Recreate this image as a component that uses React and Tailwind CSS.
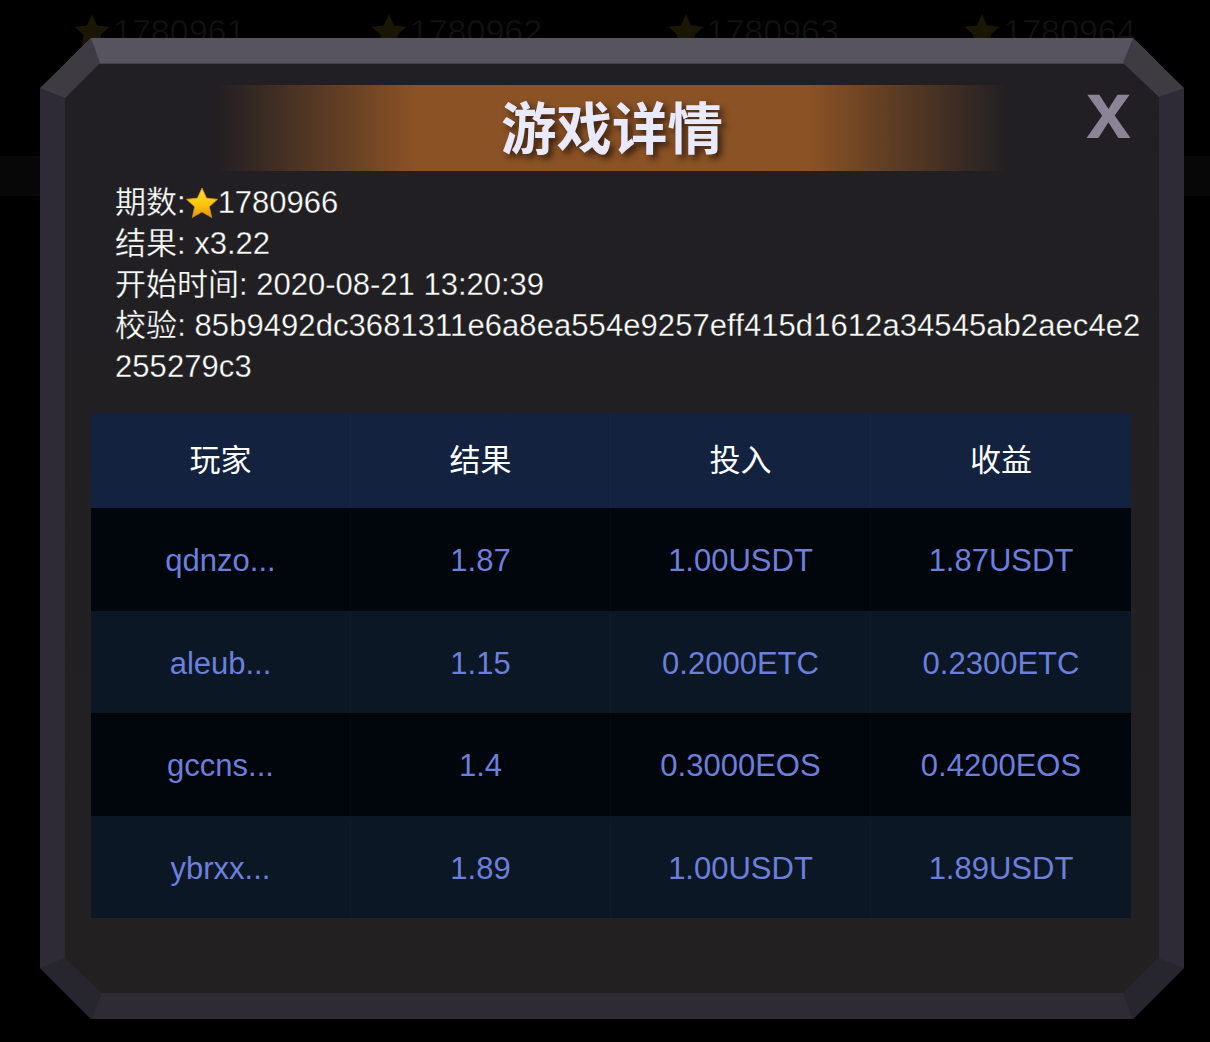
import React from 'react';

const textFont = '"Liberation Sans", "Noto Sans CJK SC", sans-serif';

const Star = ({ className, ghost }) => (
  <svg viewBox="0 0 32 32" className={className}>
    <defs>
      <linearGradient id="starFill" x1="0" y1="0" x2="0" y2="1">
        <stop offset="0" stopColor="#ffe23a" />
        <stop offset="0.55" stopColor="#fdc60c" />
        <stop offset="1" stopColor="#e8920a" />
      </linearGradient>
    </defs>
    <path
      d="M16 1l4.6 10.1 11 1.2-8.2 7.4 2.3 10.8L16 25l-9.7 5.5 2.3-10.8L.4 12.3l11-1.2z"
      fill={ghost ? '#1b1504' : 'url(#starFill)'}
      stroke={ghost ? 'none' : '#c98a1a'}
      strokeWidth="0.8"
    />
  </svg>
);

const ghostIssues = ['1780961', '1780962', '1780963', '1780964'];

const columns = ['玩家', '结果', '投入', '收益'];

const rows = [
  { player: 'qdnzo...', result: '1.87', bet: '1.00USDT', win: '1.87USDT', bg: 'bg-[#01050c]' },
  { player: 'aleub...', result: '1.15', bet: '0.2000ETC', win: '0.2300ETC', bg: 'bg-[#0b1724]' },
  { player: 'gccns...', result: '1.4', bet: '0.3000EOS', win: '0.4200EOS', bg: 'bg-[#01050c]' },
  { player: 'ybrxx...', result: '1.89', bet: '1.00USDT', win: '1.89USDT', bg: 'bg-[#0b1724]' },
];

const Cell = ({ children, last }) => (
  <div className={`flex items-center justify-center ${last ? '' : 'border-r border-white/[0.02]'}`}>{children}</div>
);

export default function App() {
  return (
    <div className="relative h-[1042px] w-[1210px] overflow-hidden bg-black" style={{ fontFamily: textFont }}>
      {/* dimmed list behind the dialog */}
      <div className="grid w-[1261px] grid-cols-4 pl-[74px] pt-[13px]">
        {ghostIssues.map((issue) => (
          <div key={issue} className="flex h-[36px] items-center text-[34px] text-[#121212] [-webkit-text-stroke:0.5px_#000]">
            <Star ghost className="mr-[3px] h-[36px] w-[36px]" />
            {issue}
          </div>
        ))}
      </div>
      <div className="mt-[107px] h-[40px] bg-[#070707]" />

      {/* dialog */}
      <div className="absolute left-[40px] top-[38px] h-[981px] w-[1144px] [clip-path:polygon(51px_0,1093px_0,1144px_50px,1144px_930px,1093px_981px,51px_981px,0_930px,0_50px)]">
        <div className="flex h-full flex-col border-x-[25px] border-b-[26px] border-t-[25px] border-x-[#2e2b37] border-b-[#2e2b33] border-t-[#57535f] bg-gradient-to-b from-[#211f23] to-[#222021]">
          <div className="h-px bg-[#45424d]" />
          <div className="relative mt-[21px] flex h-[86px] items-center justify-center">
            <div className="absolute left-[152px] top-0 h-[86px] w-[791px] bg-[linear-gradient(90deg,transparent,#8a5225_25%,#8a5225_75%,transparent)]" />
            <h1
              className="relative top-[-2px] text-[55.5px] font-bold leading-none text-[#e9e9ff] [text-shadow:4px_4px_6px_rgba(0,0,0,0.6)]"
              style={{ fontFamily: '"Noto Sans CJK SC", sans-serif' }}
            >
              游戏详情
            </h1>
            <div className="absolute right-[28px] top-[-15px] text-[81px] font-bold leading-none text-[#8a8496]">x</div>
          </div>

          <div className="ml-[50px] mr-[14px] mt-[11px] break-all text-[31px] leading-[41px] text-white [-webkit-text-stroke:0.3px_#211f23]">
            <div className="flex items-center">
              期数:
              <Star className="h-[32px] w-[32px]" />
              1780966
            </div>
            <div>结果: x3.22</div>
            <div>开始时间: 2020-08-21 13:20:39</div>
            <div className="tracking-[0.07px]">校验: 85b9492dc3681311e6a8ea554e9257eff415d1612a34545ab2aec4e2255279c3</div>
          </div>

          <div className="ml-[26px] mt-[26px] w-[1040px] text-[31px]">
            <div className="grid h-[95px] grid-cols-4 bg-[#13223f] pt-[2px] text-white">
              {columns.map((c, i) => (
                <Cell key={c} last={i === 3}>
                  {c}
                </Cell>
              ))}
            </div>
            {rows.map((r) => (
              <div key={r.player} className={`grid h-[102.5px] grid-cols-4 pt-[4px] text-[#6b7fdc] ${r.bg}`}>
                <Cell>{r.player}</Cell>
                <Cell>{r.result}</Cell>
                <Cell>{r.bet}</Cell>
                <Cell last>{r.win}</Cell>
              </div>
            ))}
          </div>
        </div>

        {/* bevelled corners */}
        <svg viewBox="0 0 1144 981" className="pointer-events-none absolute inset-0 h-full w-full">
          <polygon points="0,50 51,0 60,25 25,60" fill="#3e3b43" />
          <polygon points="1093,0 1144,50 1119,59 1083,25" fill="#3e3b43" />
          <polygon points="0,930 51,981 62,955 25,920" fill="#27252e" />
          <polygon points="1144,930 1093,981 1083,955 1118,920" fill="#27252e" />
        </svg>
      </div>
    </div>
  );
}
